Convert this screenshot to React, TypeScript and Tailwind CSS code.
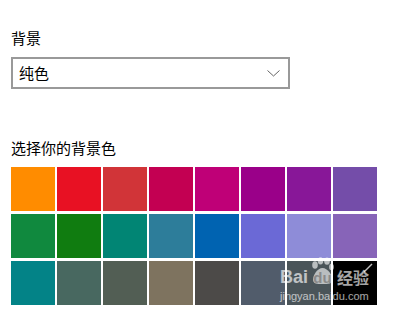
import React from "react";

const rows: string[][] = [
  ["#FF8C00", "#E81123", "#D13438", "#C30052", "#BF0077", "#9A0089", "#881798", "#744DA9"],
  ["#10893E", "#107C10", "#018574", "#2D7D9A", "#0063B1", "#6B69D6", "#8E8CD8", "#8764B8"],
  ["#038387", "#486860", "#525E54", "#7E735F", "#4C4A48", "#515C6B", "#4A5459", "#000000"],
];

const font = { fontFamily: '"Noto Sans CJK SC", "Noto Sans", sans-serif' };
const latin = { fontFamily: '"Liberation Sans", sans-serif' };

// baidu jingyan watermark sitting over the last cells
const Watermark = () => (
  <div className="absolute left-[280px] top-[257px] pointer-events-none select-none text-white/65 flex flex-col gap-[6px]">
    <div className="flex items-end h-[28px]">
      <span className="text-[18px] font-bold leading-[15px]" style={latin}>
        Bai
      </span>
      <div className="relative w-[25px] h-[28px] ml-[2px] flex items-end justify-center">
        <svg width="25" height="28" viewBox="0 0 25 28" className="absolute inset-0">
          <g fill="rgba(255,255,255,0.62)">
            <ellipse cx="5" cy="8" rx="2.8" ry="3.8" />
            <ellipse cx="10.5" cy="3.8" rx="2.8" ry="3.6" />
            <ellipse cx="17" cy="4.2" rx="2.8" ry="3.6" />
            <ellipse cx="21.5" cy="10" rx="2.4" ry="3.2" />
            <path d="M12.5 11c-5 0-9.5 7-9.5 11.5s4 4.5 9.5 4.5 10 0 10-4.5S17.5 11 12.5 11z" />
          </g>
        </svg>
        <span className="relative text-[15px] font-bold leading-[14px] text-[#8a8a8a]" style={latin}>
          du
        </span>
      </div>
      <span className="relative ml-[2px] text-[16px] font-bold leading-[16px]" style={font}>
        经验
        <svg width="10" height="10" viewBox="0 0 10 10" className="absolute -right-[4px] -top-[6px]">
          <path d="M1 9L9 1" stroke="rgba(255,255,255,0.75)" strokeWidth="1.5" />
        </svg>
      </span>
    </div>
    <span className="text-[11px] leading-none" style={latin}>
      jingyan.baidu.com
    </span>
  </div>
);

const App = () => {
  return (
    <div className="relative w-[397px] h-[312px] bg-white overflow-hidden pl-[11px] pt-[28px] text-black" style={font}>
      <div className="text-[15px] leading-[20px]">背景</div>

      <div className="mt-[9px] w-[279px] h-[32px] border-2 border-[#999999] flex items-center justify-between pl-[6px] pr-[8px]">
        <span className="text-[15px] leading-[20px]">纯色</span>
        <svg width="13" height="7" viewBox="0 0 13 7" fill="none">
          <path d="M0.5 0.5L6.5 6L12.5 0.5" stroke="#666666" strokeWidth="1" />
        </svg>
      </div>

      <div className="mt-[49px] text-[15px] leading-[20px]">选择你的背景色</div>

      <div className="mt-[9px] grid grid-cols-[repeat(8,44px)] gap-x-[2px] gap-y-[3px]">
        {rows.flat().map((c, i) => (
          <div key={i} className="h-[44px]" style={{ backgroundColor: c }} />
        ))}
      </div>

      <Watermark />
    </div>
  );
};

export default App;
